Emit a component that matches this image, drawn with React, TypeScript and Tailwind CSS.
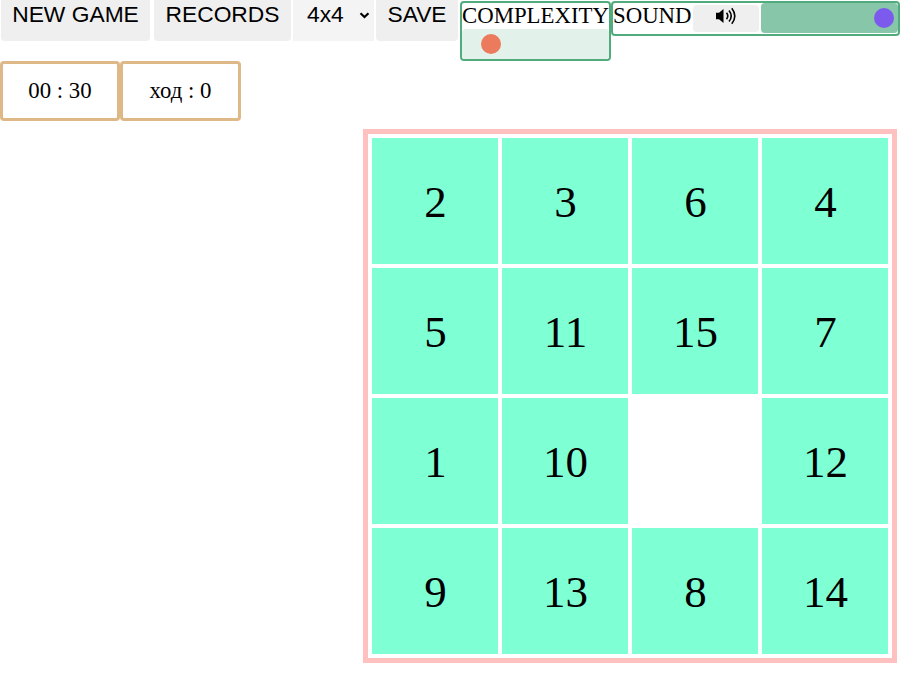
const tiles = [2, 3, 6, 4, 5, 11, 15, 7, 1, 10, 0, 12, 9, 13, 8, 14];

const sans = "font-['Liberation_Sans',Arial,sans-serif]";

function SpeakerIcon() {
  return (
    <svg width="22" height="20" viewBox="0 0 22 20" fill="none" stroke="#000" strokeWidth="1.6">
      <path d="M1 6.800h3L8.500 3v14L4 13.200H1z" fill="#000" stroke="none" />
      <path d="M11.500 6.800q2.600 3.200 0 6.400M14 4.500q4.400 5.500 0 11M16.800 2.200q6 7.800 0 15.600" />
    </svg>
  );
}

export default function App() {
  return (
    <div className="h-[675px] w-[918px] overflow-hidden bg-white font-['Liberation_Serif','Times_New_Roman',serif] text-[22.8px] text-black">
      <header className="flex h-[61px] items-start pl-px">
        <button className={`${sans} h-[41px] w-[149px] shrink-0 rounded-b-[4px] bg-[#efefef] pb-[12px] leading-[29px] whitespace-nowrap`}>
          NEW GAME
        </button>
        <button className={`${sans} ml-1 h-[41px] w-[137px] shrink-0 rounded-b-[4px] bg-[#efefef] pb-[12px] leading-[29px]`}>
          RECORDS
        </button>
        <button className={`${sans} ml-[2px] flex h-[41px] w-[81px] shrink-0 bg-[#f4f4f4] pl-[14px] leading-[29px]`}>
          4x4
          <svg className="mt-[11px] ml-[15px]" width="11" height="9" viewBox="0 0 11 9" fill="none" stroke="#000" strokeWidth="2.2">
            <path d="M1.500 2.200l4 3.800 4-3.800" />
          </svg>
        </button>
        <button className={`${sans} ml-[2px] h-[41px] w-[82px] shrink-0 rounded-b-[4px] bg-[#efefef] pb-[12px] leading-[29px]`}>
          SAVE
        </button>
        <div className="mt-px ml-[2px] h-[60px] w-[151px] shrink-0 rounded-[4px] border-2 border-[#51ac7d]">
          <div className="h-[26px] leading-[26px]">COMPLEXITY</div>
          <div className="flex h-[30px] items-center rounded-[4px] bg-[#e2f1e9] pl-[19px]">
            <div className="size-[20px] rounded-full bg-[#ec7a5c]" />
          </div>
        </div>
        <div className="mt-px flex h-[35px] w-[289px] shrink-0 rounded-[4px] border-2 border-[#51ac7d]">
          <div className="w-[80px] leading-[26px]">SOUND</div>
          <button className="mt-[2px] flex h-[27px] w-[66px] items-center justify-center rounded-[4px] bg-[#efefef] pb-[5px]">
            <SpeakerIcon />
          </button>
          <div className="ml-[2px] flex h-[30px] flex-1 items-center justify-end rounded-[4px] bg-[#87c6a8] pr-[4px]">
            <div className="size-[20px] rounded-full bg-[#7b5aed]" />
          </div>
        </div>
      </header>
      <section className="flex">
        <div className="flex h-[60px] w-[120px] items-center justify-center rounded-[4px] border-3 border-[#deb887]">00 : 30</div>
        <div className="flex h-[60px] w-[121px] items-center justify-center rounded-[4px] border-3 border-[#deb887]">ход : 0</div>
      </section>
      <main className="mt-2 ml-[363px] grid size-[534px] grid-cols-4 grid-rows-4 gap-1 border-5 border-[#ffc0c0] p-1 text-[45px]">
        {tiles.map((n) => (
          <div key={n} className={`flex items-center justify-center pt-[3px] pl-px ${n ? "bg-[#7fffd4]" : "bg-white"}`}>
            {n || ""}
          </div>
        ))}
      </main>
    </div>
  );
}
